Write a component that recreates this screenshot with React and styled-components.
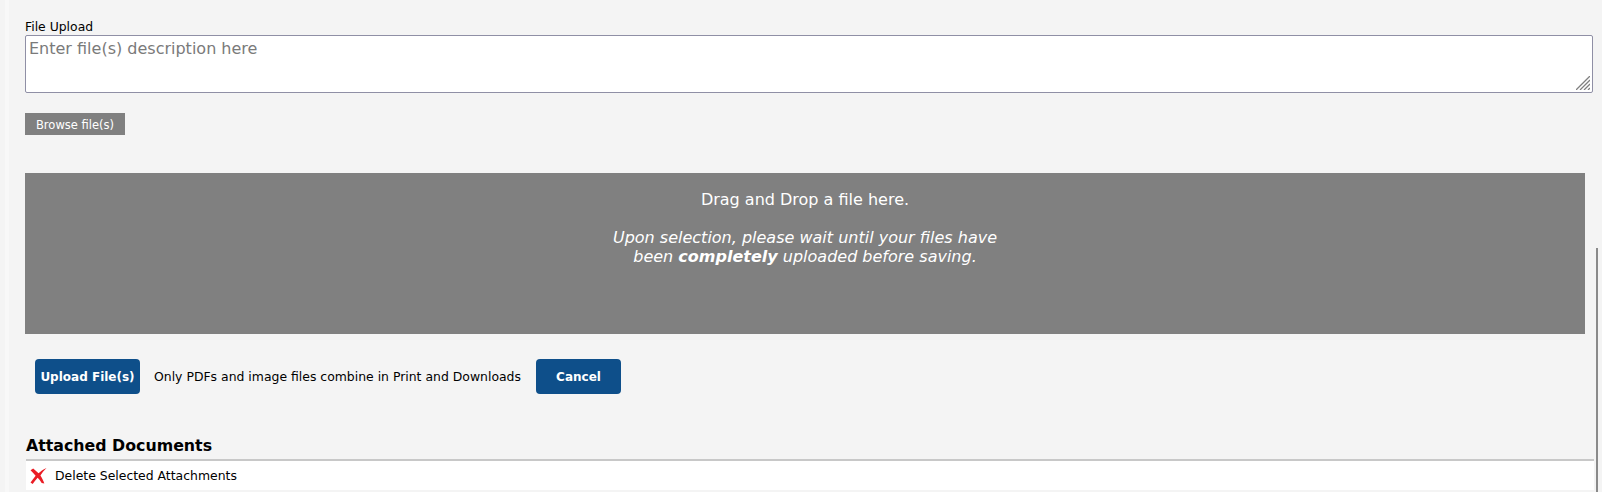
import styled, { createGlobalStyle } from "styled-components";

const GlobalStyle = createGlobalStyle`
  html, body {
    margin: 0;
    height: 492px;
    overflow: hidden;
    background: #f4f4f4;
  }
  body {
    font-family: "DejaVu Sans", Verdana, sans-serif;
    color: #000;
  }
`;

export default function App() {
  return (
    <>
      <GlobalStyle />
      <Page>
        <Content>
          <Label>File Upload</Label>
          <DescriptionWrap>
            <Description placeholder="Enter file(s) description here" />
            <ResizeGrip width="14" height="14" viewBox="0 0 14 14">
              <path d="M0 14 L14 0 M4 14 L14 4 M8 14 L14 8 M12 14 L14 12" stroke="#808080" strokeWidth="1.300" />
            </ResizeGrip>
          </DescriptionWrap>
          <BrowseButton>Browse file(s)</BrowseButton>
          <DropZone>
            <DropTitle>Drag and Drop a file here.</DropTitle>
            <DropNote>
              Upon selection, please wait until your files have
              <br />
              been <strong>completely</strong> uploaded before saving.
            </DropNote>
          </DropZone>
          <Actions>
            <ActionButton $width={105}>Upload File(s)</ActionButton>
            <Hint>Only PDFs and image files combine in Print and Downloads</Hint>
            <ActionButton $width={85}>Cancel</ActionButton>
          </Actions>
          <SectionTitle>Attached Documents</SectionTitle>
          <DeleteRow>
            <svg width="17" height="16" viewBox="0 0 16 15">
              <path d="M0.500 2 L3 0.500 C5 2 6.500 3.500 8 5 C10 3.200 12 1.500 15.500 0 C13 2.500 11.200 4.800 9.800 7 C11.200 9.200 12.500 11.500 13.500 14.500 L11 14 C9.800 12 8.500 10.500 7.200 9.200 C5.500 11 4 12.800 2.500 15 L0.500 13.500 C2 11.500 3.500 9.500 5.300 7.300 C3.800 5.500 2.200 3.800 0.500 2 Z" fill="#ea1c24" />
            </svg>
            <span>Delete Selected Attachments</span>
          </DeleteRow>
        </Content>
        <ScrollThumb />
      </Page>
    </>
  );
}

const Page = styled.div`
  position: relative;
  height: 492px;
  overflow: hidden;
  background: #f4f4f4;
  padding-left: 5px;
`;

const Content = styled.div`
  box-sizing: border-box;
  width: 1588px;
  height: 492px;
  padding: 19px 0 0 16px;
  border-left: 4px solid #f8f8f8;
  display: flex;
  flex-direction: column;
  align-items: flex-start;
`;

const Label = styled.label`
  font-size: 12.400px;
  line-height: 16px;
`;

const DescriptionWrap = styled.div`
  position: relative;
  width: 100%;
  height: 58px;
`;

const Description = styled.textarea`
  display: block;
  box-sizing: border-box;
  width: 100%;
  height: 58px;
  margin: 0;
  padding: 3px;
  border: 1px solid #8f8fa5;
  border-radius: 2px;
  background: #fff;
  font-family: "DejaVu Sans", Verdana, sans-serif;
  font-size: 16px;
  resize: none;
  outline: none;

  &::placeholder {
    color: #7a7a7a;
    opacity: 1;
  }
`;

const ResizeGrip = styled.svg`
  position: absolute;
  right: 3px;
  bottom: 3px;
`;

const BrowseButton = styled.button`
  box-sizing: border-box;
  width: 100px;
  height: 22px;
  margin-top: 20px;
  padding: 2px 0 0;
  border: 0;
  background: #808080;
  color: #fff;
  font-family: inherit;
  font-size: 11.500px;
`;

const DropZone = styled.div`
  box-sizing: border-box;
  width: 1560px;
  height: 161px;
  margin-top: 38px;
  padding-top: 18px;
  background: #808080;
  color: #fff;
  text-align: center;
  font-size: 16px;
`;

const DropTitle = styled.div`
  line-height: 18px;
`;

const DropNote = styled.em`
  display: block;
  margin-top: 19px;
  line-height: 19px;
`;

const Actions = styled.div`
  display: flex;
  align-items: center;
  margin-top: 25px;
  margin-left: 10px;
`;

const ActionButton = styled.button`
  width: ${(p) => p.$width}px;
  height: 35px;
  padding: 0;
  border: 0;
  border-radius: 4px;
  background: #0e4f8a;
  color: #fff;
  font-family: inherit;
  font-size: 12px;
  font-weight: 700;
`;

const Hint = styled.span`
  margin: 0 15px 0 14px;
  font-size: 12.430px;
`;

const SectionTitle = styled.h3`
  width: 100%;
  margin: 41px 0 0 1px;
  padding-bottom: 3px;
  border-bottom: 2px solid #c8c8c8;
  font-size: 15.800px;
  line-height: 21px;
`;

const DeleteRow = styled.div`
  box-sizing: border-box;
  width: 100%;
  height: 29px;
  margin-left: 1px;
  padding-left: 4px;
  display: flex;
  align-items: center;
  gap: 8px;
  background: #fff;
  font-size: 12.430px;
`;

const ScrollThumb = styled.div`
  position: absolute;
  top: 248px;
  bottom: 0;
  right: 4px;
  width: 2px;
  background: #8a8a8a;
`;
